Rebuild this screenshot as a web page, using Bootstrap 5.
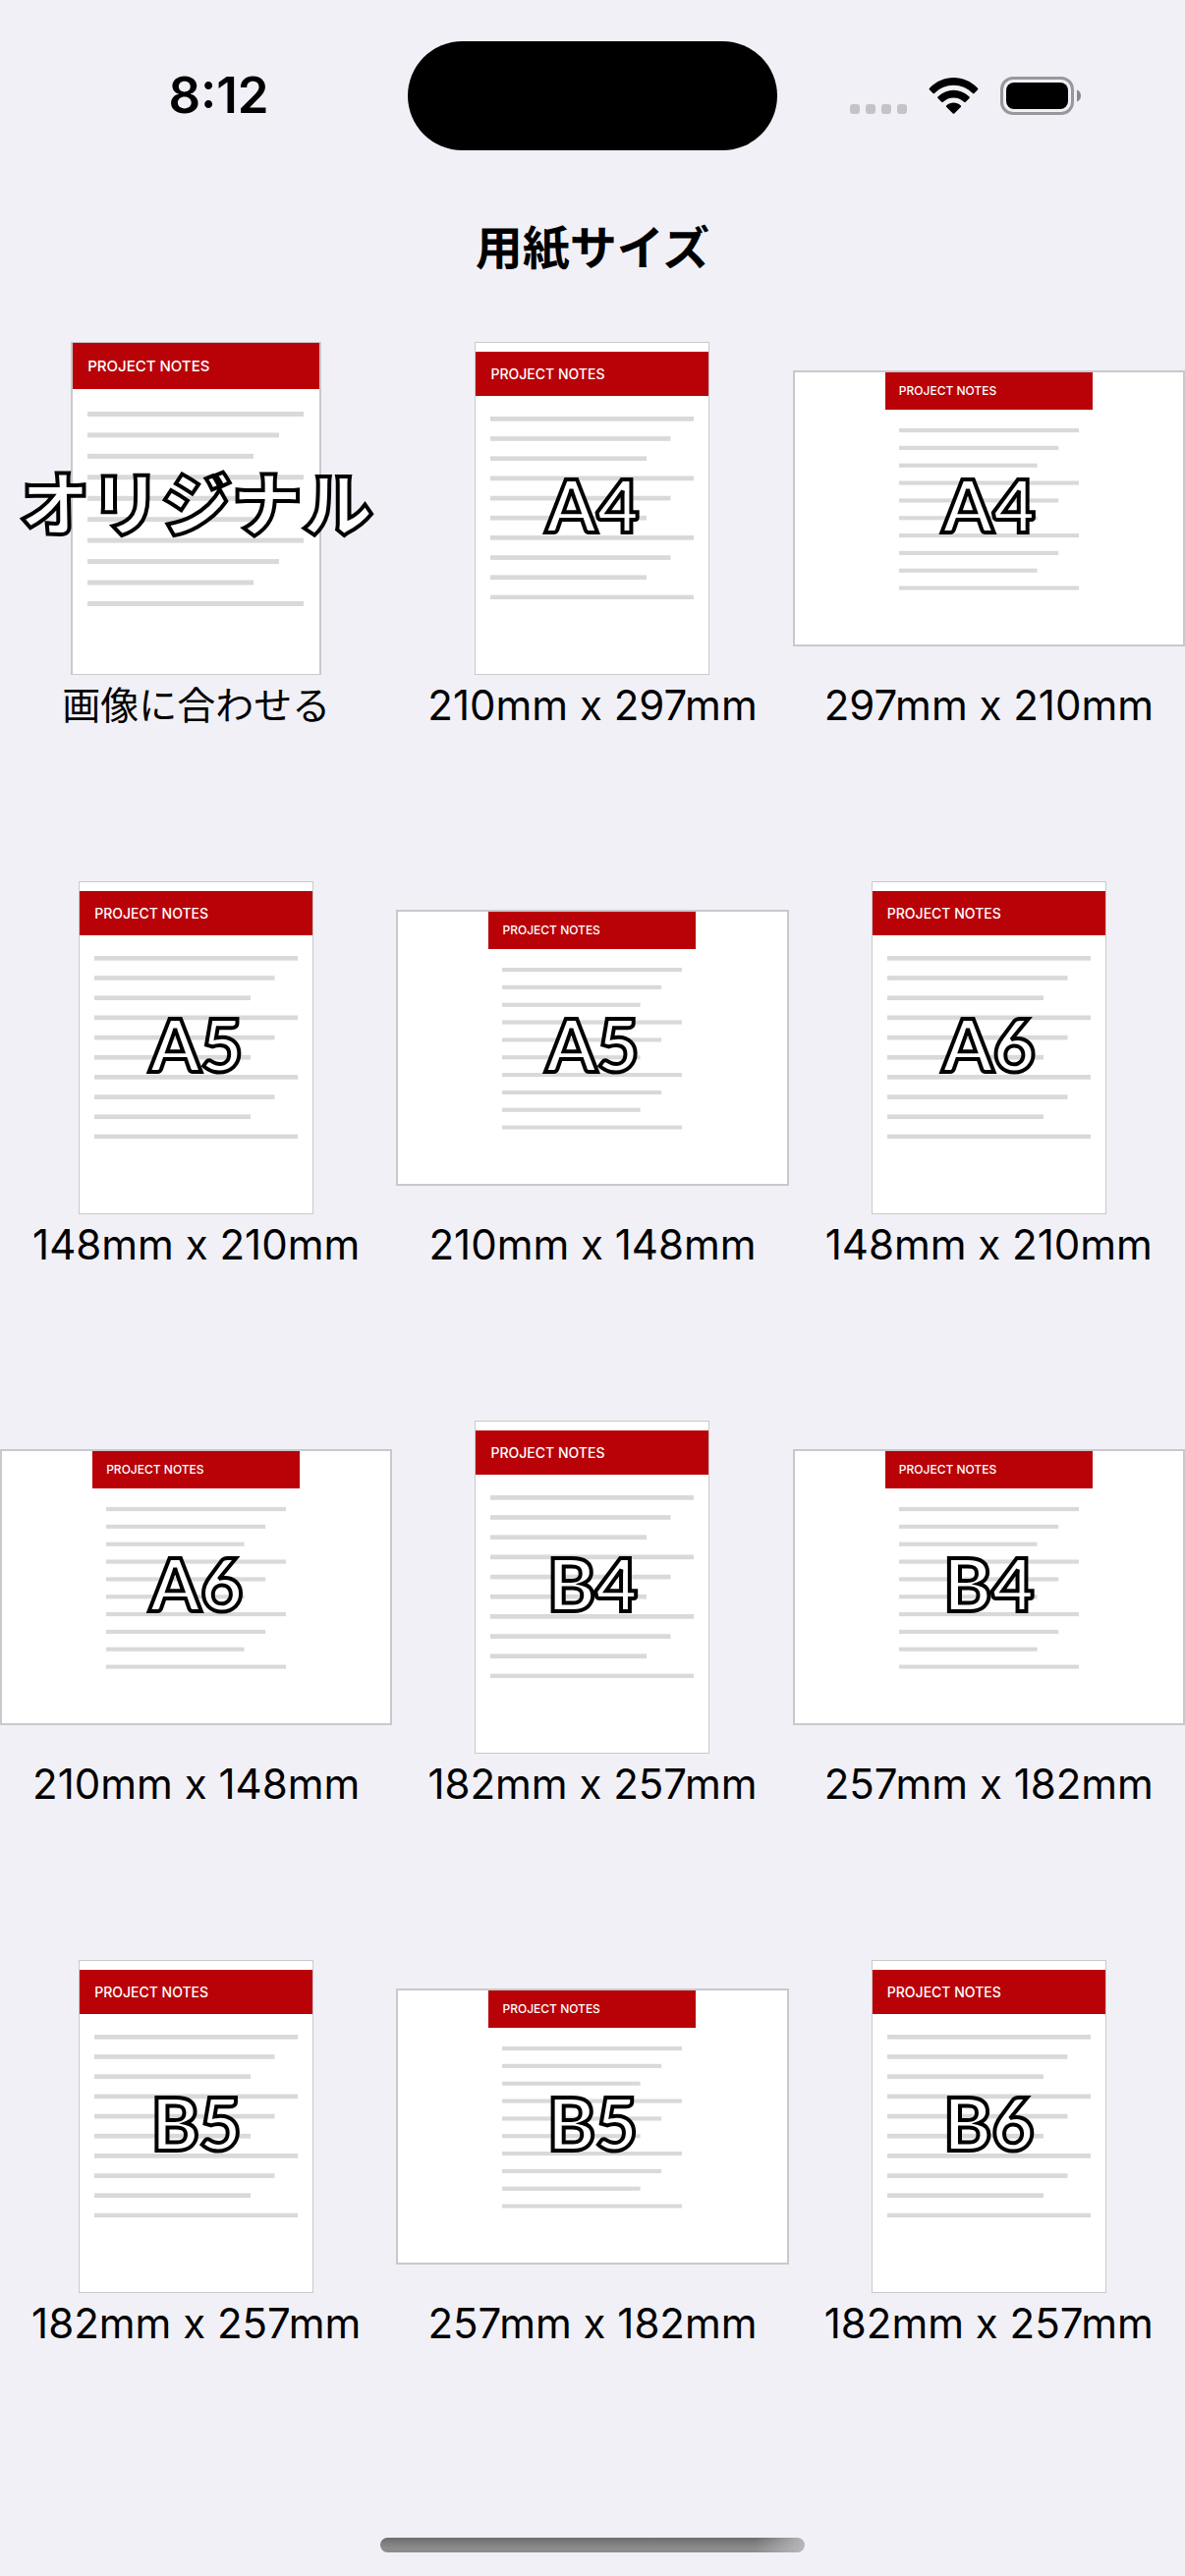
<!DOCTYPE html>
<html lang="ja">
<head>
<meta charset="utf-8">
<meta name="viewport" content="width=device-width, initial-scale=1">
<title>用紙サイズ</title>
<link href="https://cdn.jsdelivr.net/npm/bootstrap@5.3.0/dist/css/bootstrap.min.css" rel="stylesheet">
<style>
  body { background: #f1f0f6; color: #000; font-family: Inter, "Noto Sans CJK JP", sans-serif; text-rendering: geometricPrecision; }

  /* status bar */
  .status-bar { display: grid; grid-template-columns: 1fr 376px 1fr; padding: 42px 0; }
  .island { height: 111px; border-radius: 56px; background: #000; }
  .clock { font-size: 51px; line-height: 60px; font-weight: 600; padding-left: 30px; }
  .indicators { padding-right: 32px; }

  .page-title { font-size: 48px; line-height: 60px; font-weight: 700; padding: 28px 0 65px; margin: 0; }

  /* size picker */
  .size-option { color: #000; padding: 0 0 149px; border: 0; border-radius: 0; background: none; width: 100%; }
  .preview { height: 339px; }
  .caption-text { font-size: 42px; line-height: 61px; }
  .caption-ja { font-size: 39px; }
  .size-label { font-family: Lato, "Noto Sans CJK JP", sans-serif; font-weight: 900; font-size: 74px; line-height: 72px;
    padding-bottom: 8px; color: #fff; -webkit-text-stroke: 4px #000; }
  .size-label-ja { font-weight: 900; font-size: 72px; padding-bottom: 12px; }

  /* sheets of paper */
  .paper { background: #fff; border: 1px solid #c9c9cb; height: 339px; width: 239px; }
  .paper-fit { width: 255px; border-width: 1px 2px; }
  .paper-wide { width: 100%; height: 281px; border-width: 2px; }
  .notes { width: 100%; padding-top: 9px; }
  .paper-fit .notes { padding-top: 0; }
  .paper-wide .notes { width: 211px; padding-top: 0; }
  .notes-head { background: #b80208; color: #fff; font-weight: 500; font-size: 14px; line-height: 45px; padding: 0 15px; margin-bottom: 21px; }
  .paper-fit .notes-head { font-size: 15px; line-height: 47px; margin-bottom: 23px; }
  .paper-wide .notes-head { font-size: 12px; line-height: 38px; padding: 0 14px; margin-bottom: 19px; }
  .notes-lines { display: block; margin-left: 15px; width: 207px; }
  .paper-fit .notes-lines { width: 220px; }
  .paper-wide .notes-lines { margin-left: 14px; width: 183px; }

  .home-bar { padding: 38px 0 24px; }
  .home-pill { width: 432px; height: 15px; border-radius: 8px;
    background: linear-gradient(100deg, transparent 88%, #b9b9bd 100%), linear-gradient(#6c6d6e, #8c8c8d 70%); }
</style>
<script src="https://cdn.jsdelivr.net/npm/bootstrap@5.3.0/dist/js/bootstrap.bundle.min.js"></script>
</head>
<body>
<svg width="0" height="0" class="position-absolute" aria-hidden="true">
  <symbol id="lines" viewBox="0 0 220 198">
    <g fill="#d9d9d9">
      <rect y="0" width="220" height="5"/><rect y="21.4" width="195" height="5"/><rect y="42.9" width="169" height="5"/>
      <rect y="64.3" width="220" height="5"/><rect y="85.8" width="195" height="5"/><rect y="107.2" width="169" height="5"/>
      <rect y="128.6" width="220" height="5"/><rect y="150.1" width="195" height="5"/><rect y="171.5" width="169" height="5"/>
      <rect y="193" width="220" height="5"/>
    </g>
  </symbol>
</svg>

<div class="d-flex flex-column min-vh-100 overflow-hidden">
  <header>
    <div class="status-bar align-items-center">
      <div class="clock text-center">8:12</div>
      <div class="island"></div>
      <div class="indicators d-flex justify-content-center">
        <svg width="236" height="40" viewBox="0 0 236 40" aria-hidden="true">
          <g fill="#c3c3c8"><rect x="0" y="28" width="10" height="10" rx="3"/><rect x="16" y="28" width="10" height="10" rx="3"/><rect x="32" y="28" width="10" height="10" rx="3"/><rect x="48" y="28" width="10" height="10" rx="3"/></g>
          <path d="M81.200 11.500C88 4.500 96.500 1 105.500 1s17.500 3.500 24.300 10.500c.8.800.8 1.300.1 2l-3.200 3.200c-.7.700-1.300.7-2 0C119.500 11.400 112.700 8.700 105.500 8.700S91.500 11.400 86.300 16.700c-.7.700-1.300.7-2 0l-3.200-3.200c-.7-.7-.6-1.300.1-2zM89.700 20.300c4.400-4.200 9.900-6.500 15.800-6.500s11.400 2.300 15.800 6.500c.7.700.7 1.300 0 2l-3.300 3.300c-.7.700-1.200.7-1.900.1-3-2.700-6.700-4.200-10.600-4.200s-7.600 1.500-10.600 4.200c-.7.600-1.200.6-1.900-.1l-3.300-3.300c-.7-.7-.7-1.300 0-2zM98.400 29.200c2-1.700 4.500-2.700 7.100-2.700s5.100 1 7.100 2.700c.7.600.7 1.200.1 1.900l-6.200 6.200c-.7.700-1.300.7-2 0l-6.200-6.200c-.6-.7-.6-1.300.1-1.900z"/>
          <rect x="154.500" y="1.500" width="72" height="36" rx="11.500" fill="none" stroke="#98979b" stroke-width="3"/>
          <rect x="159" y="6" width="63" height="27" rx="8"/>
          <path d="M231 13.500c2.700 1 4 3.300 4 6s-1.300 5-4 6z" fill="#88878b"/>
        </svg>
      </div>
    </div>
    <h1 class="page-title text-center">用紙サイズ</h1>
  </header>

  <main class="row row-cols-3 gx-1">
    <div class="col"><button type="button" class="size-option d-flex flex-column align-items-center">
      <span class="preview w-100 d-flex align-items-center justify-content-center position-relative">
        <span class="paper paper-fit d-flex justify-content-center"><span class="notes text-start"><span class="notes-head d-block">PROJECT NOTES</span><svg class="notes-lines" viewBox="0 0 220 198"><use href="#lines"/></svg></span></span>
        <span class="size-label size-label-ja position-absolute top-50 start-50 translate-middle text-nowrap">オリジナル</span>
      </span>
      <span class="caption-text caption-ja">画像に合わせる</span></button></div>
    <div class="col"><button type="button" class="size-option d-flex flex-column align-items-center">
      <span class="preview w-100 d-flex align-items-center justify-content-center position-relative">
        <span class="paper d-flex justify-content-center"><span class="notes text-start"><span class="notes-head d-block">PROJECT NOTES</span><svg class="notes-lines" viewBox="0 0 220 198"><use href="#lines"/></svg></span></span>
        <span class="size-label position-absolute top-50 start-50 translate-middle text-nowrap">A4</span>
      </span>
      <span class="caption-text">210mm x 297mm</span></button></div>
    <div class="col"><button type="button" class="size-option d-flex flex-column align-items-center">
      <span class="preview w-100 d-flex align-items-center justify-content-center position-relative">
        <span class="paper paper-wide d-flex justify-content-center"><span class="notes text-start"><span class="notes-head d-block">PROJECT NOTES</span><svg class="notes-lines" viewBox="0 0 220 198"><use href="#lines"/></svg></span></span>
        <span class="size-label position-absolute top-50 start-50 translate-middle text-nowrap">A4</span>
      </span>
      <span class="caption-text">297mm x 210mm</span></button></div>

    <div class="col"><button type="button" class="size-option d-flex flex-column align-items-center">
      <span class="preview w-100 d-flex align-items-center justify-content-center position-relative">
        <span class="paper d-flex justify-content-center"><span class="notes text-start"><span class="notes-head d-block">PROJECT NOTES</span><svg class="notes-lines" viewBox="0 0 220 198"><use href="#lines"/></svg></span></span>
        <span class="size-label position-absolute top-50 start-50 translate-middle text-nowrap">A5</span>
      </span>
      <span class="caption-text">148mm x 210mm</span></button></div>
    <div class="col"><button type="button" class="size-option d-flex flex-column align-items-center">
      <span class="preview w-100 d-flex align-items-center justify-content-center position-relative">
        <span class="paper paper-wide d-flex justify-content-center"><span class="notes text-start"><span class="notes-head d-block">PROJECT NOTES</span><svg class="notes-lines" viewBox="0 0 220 198"><use href="#lines"/></svg></span></span>
        <span class="size-label position-absolute top-50 start-50 translate-middle text-nowrap">A5</span>
      </span>
      <span class="caption-text">210mm x 148mm</span></button></div>
    <div class="col"><button type="button" class="size-option d-flex flex-column align-items-center">
      <span class="preview w-100 d-flex align-items-center justify-content-center position-relative">
        <span class="paper d-flex justify-content-center"><span class="notes text-start"><span class="notes-head d-block">PROJECT NOTES</span><svg class="notes-lines" viewBox="0 0 220 198"><use href="#lines"/></svg></span></span>
        <span class="size-label position-absolute top-50 start-50 translate-middle text-nowrap">A6</span>
      </span>
      <span class="caption-text">148mm x 210mm</span></button></div>

    <div class="col"><button type="button" class="size-option d-flex flex-column align-items-center">
      <span class="preview w-100 d-flex align-items-center justify-content-center position-relative">
        <span class="paper paper-wide d-flex justify-content-center"><span class="notes text-start"><span class="notes-head d-block">PROJECT NOTES</span><svg class="notes-lines" viewBox="0 0 220 198"><use href="#lines"/></svg></span></span>
        <span class="size-label position-absolute top-50 start-50 translate-middle text-nowrap">A6</span>
      </span>
      <span class="caption-text">210mm x 148mm</span></button></div>
    <div class="col"><button type="button" class="size-option d-flex flex-column align-items-center">
      <span class="preview w-100 d-flex align-items-center justify-content-center position-relative">
        <span class="paper d-flex justify-content-center"><span class="notes text-start"><span class="notes-head d-block">PROJECT NOTES</span><svg class="notes-lines" viewBox="0 0 220 198"><use href="#lines"/></svg></span></span>
        <span class="size-label position-absolute top-50 start-50 translate-middle text-nowrap">B4</span>
      </span>
      <span class="caption-text">182mm x 257mm</span></button></div>
    <div class="col"><button type="button" class="size-option d-flex flex-column align-items-center">
      <span class="preview w-100 d-flex align-items-center justify-content-center position-relative">
        <span class="paper paper-wide d-flex justify-content-center"><span class="notes text-start"><span class="notes-head d-block">PROJECT NOTES</span><svg class="notes-lines" viewBox="0 0 220 198"><use href="#lines"/></svg></span></span>
        <span class="size-label position-absolute top-50 start-50 translate-middle text-nowrap">B4</span>
      </span>
      <span class="caption-text">257mm x 182mm</span></button></div>

    <div class="col"><button type="button" class="size-option d-flex flex-column align-items-center">
      <span class="preview w-100 d-flex align-items-center justify-content-center position-relative">
        <span class="paper d-flex justify-content-center"><span class="notes text-start"><span class="notes-head d-block">PROJECT NOTES</span><svg class="notes-lines" viewBox="0 0 220 198"><use href="#lines"/></svg></span></span>
        <span class="size-label position-absolute top-50 start-50 translate-middle text-nowrap">B5</span>
      </span>
      <span class="caption-text">182mm x 257mm</span></button></div>
    <div class="col"><button type="button" class="size-option d-flex flex-column align-items-center">
      <span class="preview w-100 d-flex align-items-center justify-content-center position-relative">
        <span class="paper paper-wide d-flex justify-content-center"><span class="notes text-start"><span class="notes-head d-block">PROJECT NOTES</span><svg class="notes-lines" viewBox="0 0 220 198"><use href="#lines"/></svg></span></span>
        <span class="size-label position-absolute top-50 start-50 translate-middle text-nowrap">B5</span>
      </span>
      <span class="caption-text">257mm x 182mm</span></button></div>
    <div class="col"><button type="button" class="size-option d-flex flex-column align-items-center">
      <span class="preview w-100 d-flex align-items-center justify-content-center position-relative">
        <span class="paper d-flex justify-content-center"><span class="notes text-start"><span class="notes-head d-block">PROJECT NOTES</span><svg class="notes-lines" viewBox="0 0 220 198"><use href="#lines"/></svg></span></span>
        <span class="size-label position-absolute top-50 start-50 translate-middle text-nowrap">B6</span>
      </span>
      <span class="caption-text">182mm x 257mm</span></button></div>
  </main>

  <footer class="home-bar d-flex justify-content-center mt-auto"><div class="home-pill"></div></footer>
</div>
</body>
</html>
